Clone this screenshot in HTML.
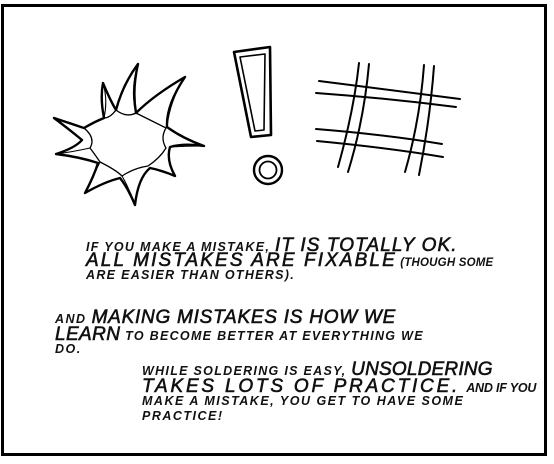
<!DOCTYPE html>
<html><head><style>
body{margin:0;width:554px;height:464px;background:#fff;overflow:hidden;position:relative;font-family:"Liberation Sans",sans-serif;}
.frame{position:absolute;left:1px;top:4px;width:546px;height:452px;border:3.5px solid #000;border-top-width:3px;box-sizing:border-box;}
.l{position:absolute;white-space:nowrap;font-style:italic;font-weight:bold;color:#111;text-transform:uppercase;line-height:1;}
.s{font-size:12.5px;letter-spacing:1.3px;}
.b{font-size:19px;font-weight:normal;-webkit-text-stroke:0.6px #111;}
</style></head><body>
<div class="frame"></div>
<svg width="554" height="464" style="position:absolute;left:0;top:0" fill="none" stroke="#000" stroke-linecap="round" stroke-linejoin="round">
<path stroke-width="2.4" d="M54,118 Q75,125 84,128 Q94,122 104,118 Q100,98 103,83 Q110,100 116,110 Q123,84 138,64 Q132,90 136,113 Q154,95 185,77 Q166,105 167,127 Q182,138 204,146 Q184,143 170,147 Q166,160 175,176 Q161,170 150,168 Q138,178 135,205 Q128,188 120,178 Q104,182 85,193 Q94,176 98,163 Q80,157 56,154 Q75,148 82,140 Q70,130 54,118Z"/>
<path stroke-width="1.3" d="M84,128 Q96,138 90,148 Q96,156 100,162 Q116,170 122,176 Q134,168 148,166 Q160,158 166,148 Q160,138 166,128 Q150,120 136,113 Q126,118 116,110 Q110,118 104,118"/>
<path stroke-width="1.1" d="M104,118 Q108,100 103,83 M136,113 Q130,90 138,64 M167,127 Q170,100 185,77 M170,147 Q186,146 204,146 M150,168 Q162,172 175,176 M122,176 Q130,190 135,205 M100,162 Q92,178 85,193 M90,148 Q72,152 56,154 M84,128 Q70,122 54,118"/>
<path stroke-width="2.6" d="M234,52 L270,47 L271,135 L251,137 Z"/>
<path stroke-width="1.6" d="M240,57 L265,54 L264,130 L255,131 Z"/>
<circle cx="268" cy="170" r="14" stroke-width="2.4"/>
<circle cx="268" cy="170" r="8.5" stroke-width="1.8"/>
<g stroke-width="2">
<path d="M319,81 Q390,90 460,99"/>
<path d="M316,93 Q385,98 456,107"/>
<path d="M316,129 Q390,135 442,144"/>
<path d="M317,141 Q390,148 443,157"/>
<path d="M359,63 Q354,110 338,167"/>
<path d="M369,64 Q364,120 348,172"/>
<path d="M424,65 Q420,120 405,172"/>
<path d="M434,66 Q430,120 419,175"/>
</g>
</svg>
<div class="l" style="left:86px;top:236px"><span class="s">If you make a mistake, </span><span class="b" style="letter-spacing:1.1px">it is totally ok.</span></div>
<div class="l" style="left:86px;top:251px"><span class="b" style="letter-spacing:2.1px">All mistakes are fixable</span><span class="s" style="font-size:11.5px;letter-spacing:0.2px"> (though some</span></div>
<div class="l s" style="left:86px;top:269px">are easier than others).</div>
<div class="l" style="left:55px;top:308px"><span class="s" style="letter-spacing:1.5px">and </span><span class="b" style="letter-spacing:0.75px">making mistakes is how we</span></div>
<div class="l" style="left:55px;top:325px"><span class="b" style="letter-spacing:0.4px">learn</span><span class="s"> to become better at everything we</span></div>
<div class="l s" style="left:55px;top:343px;letter-spacing:1.5px">do.</div>
<div class="l" style="left:142px;top:360px"><span class="s">while soldering is easy, </span><span class="b" style="letter-spacing:0.2px">unsoldering</span></div>
<div class="l" style="left:142px;top:377px"><span class="b" style="letter-spacing:2.8px">takes lots of practice.</span><span class="s" style="letter-spacing:-0.2px">&nbsp; and if you</span></div>
<div class="l s" style="left:142px;top:395px;letter-spacing:1.5px">make a mistake, you get to have some</div>
<div class="l s" style="left:142px;top:410px;letter-spacing:1.5px">practice!</div>
</body></html>
